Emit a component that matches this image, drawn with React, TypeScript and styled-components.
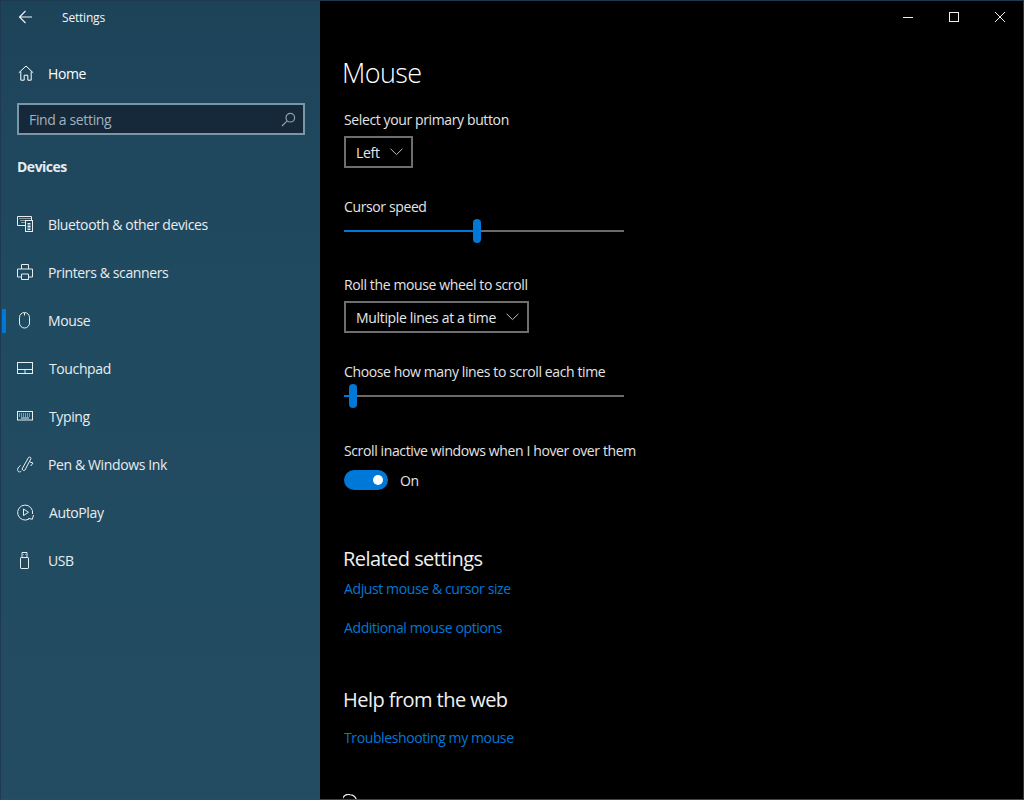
import React from "react";
import styled, { createGlobalStyle } from "styled-components";

const Global = createGlobalStyle`
  html, body { margin: 0; padding: 0; background: #000; }
  body { font-family: "Open Sans", "Noto Sans", "Liberation Sans", sans-serif; }
  * { box-sizing: border-box; }
`;

const Frame = styled.div`
  width: 1024px; height: 800px; display: flex; overflow: hidden;
  border: 1px solid #1d3a50; border-bottom-color: #1f5068; background: #000;
  position: relative;
`;
const Sidebar = styled.aside`
  width: 319px; flex: none; display: flex; flex-direction: column; color: #fff;
  background: linear-gradient(180deg, #1d4359 0%, #204a60 35%, #234c62 100%);
`;
const TitleRow = styled.div`
  height: 32px; margin-bottom: 23px; display: flex; align-items: center; padding-left: 17px; gap: 28px;
`;
const TitleText = styled.span`
  font-size: 12px; letter-spacing: -0.2px; color: #f2f5f7;
`;
const HomeRow = styled.div`
  height: 34px; display: flex; align-items: center; padding-left: 17px; gap: 14px;
  font-size: 14px; letter-spacing: -0.4px; color: #fff;
`;
const SearchBox = styled.div`
  margin: 13px 15px 0 16px; height: 32px; display: flex; align-items: center; justify-content: space-between;
  padding: 0 7px 0 10px; border: 2px solid #7b97a6; background: #15293a;
  font-size: 14px; letter-spacing: -0.35px; color: #a3b1bb;
`;
const Section = styled.div`
  margin: 22px 0 0 16px; height: 20px; line-height: 20px; font-size: 14px; font-weight: 700;
  letter-spacing: -0.5px; color: #e6ecef;
`;
const NavList = styled.nav`
  margin-top: 23px; display: flex; flex-direction: column;
`;
const NavItem = styled.div<{ $active?: boolean; $gap?: number }>`
  height: 48px; display: flex; align-items: center; padding-left: 16px; gap: ${(p) => p.$gap ?? 15}px; position: relative;
  font-size: 14px; letter-spacing: -0.38px; color: #e8edf0;
  &::before {
    content: ""; display: ${(p) => (p.$active ? "block" : "none")};
    position: absolute; left: 1px; top: 13px; width: 4px; height: 24px; background: #0078d7;
  }
`;
const IconSlot = styled.span`
  width: 16px; height: 20px; display: flex; align-items: center; justify-content: center; flex: none;
  svg { display: block; overflow: visible; }
`;
const Main = styled.main`
  flex: 1; min-width: 0; position: relative; padding: 53px 0 0 22px; color: #fff; overflow: hidden;
`;
const WindowControls = styled.div`
  position: absolute; top: 0; right: 0; display: flex; height: 32px;
`;
const ControlButton = styled.span`
  width: 46px; height: 32px; display: flex; align-items: center; justify-content: center;
`;
const PageTitle = styled.h1`
  margin: 0; height: 38px; line-height: 38px; font-size: 27px; font-weight: 300; letter-spacing: -0.6px; color: #fff;
`;
const Field = styled.div<{ $top: number }>`
  margin-top: ${(p) => p.$top}px; margin-left: 2px;
`;
const Label = styled.div`
  font-size: 14px; line-height: 20px; letter-spacing: -0.38px; color: #e4e4e4;
`;
const Dropdown = styled.div`
  margin-top: 6px; display: inline-flex; align-items: center; height: 32px; padding: 0 8px 0 10px; gap: 10px;
  border: 2px solid #6e6e6e; font-size: 14px; letter-spacing: -0.33px; color: #e8e8e8;
`;
const SliderTrack = styled.div`
  position: relative; width: 280px; height: 2px; margin-top: 13px; margin-bottom: 12px; background: #6a6a6a;
`;
const SliderFill = styled.div`
  position: absolute; left: 0; top: 0; height: 2px; background: #0078d7;
`;
const SliderThumb = styled.div`
  position: absolute; top: -11px; width: 8px; height: 24px; border-radius: 4px; background: #0078d7;
`;
const ToggleRow = styled.div`
  margin-top: 9px; display: flex; align-items: center; gap: 12px; font-size: 14px; letter-spacing: -0.35px; color: #e4e4e4;
`;
const Toggle = styled.div`
  width: 44px; height: 20px; border-radius: 10px; background: #0078d7; position: relative;
  &::after {
    content: ""; position: absolute; right: 5px; top: 5px; width: 10px; height: 10px; border-radius: 50%; background: #fff;
  }
`;
const SectionTitle = styled.h2<{ $top: number }>`
  margin: ${(p) => p.$top}px 0 0 1px; height: 26px; line-height: 26px; font-size: 20px; font-weight: 400;
  letter-spacing: -0.55px; color: #f0f0f0;
`;
const LinkText = styled.a<{ $top: number }>`
  display: block; margin: ${(p) => p.$top}px 0 0 2px; line-height: 20px; font-size: 14px; letter-spacing: -0.39px;
  color: #0078d7; text-decoration: none;
`;
const HelpRow = styled.div`
  margin: 46px 0 0 1px; display: flex; align-items: center;
`;

const stroke = { fill: "none", stroke: "currentColor", strokeWidth: 1 } as const;

const Back = () => (
  <svg width="16" height="16" viewBox="0 0 16 16" {...stroke} color="#f2f5f7" strokeWidth={1.1}><path d="M1.5 8H14M7.5 2 1.5 8l6 6" /></svg>
);
const Home = () => (
  <svg width="16" height="16" viewBox="0 0 16 16" {...stroke} color="#fff"><path d="M.8 7.8 8 1l7.2 6.8M2.8 6.5v8.7h3.4v-5h3.6v5h3.4V6.5" /></svg>
);
const Search = () => (
  <svg width="15" height="15" viewBox="0 0 15 15" {...stroke} color="#8fa0ab" strokeWidth={1.2}><circle cx="9.3" cy="5.7" r="4.3" /><path d="M6.2 8.8 1 14" /></svg>
);
const Bluetooth = () => (
  <svg width="16" height="16" viewBox="0 0 16 16" {...stroke} color="#e8edf0"><path d="M8 9.5H.5v-9h14v3.5" /><path d="M2.5 2.5h1m1 0h1m1 0h1m1 0h1m1 0h1m1 0h1m-10 2h1m1 0h1m1 0h1m-4 2h1m1 0h1" /><rect x="8.5" y="4.5" width="7" height="11" /><path d="M10.5 7.5h3m-3 1.5h3m-3 1.5h3m-3 1.5h3m-3 1.5h3" /></svg>
);
const Printer = () => (
  <svg width="16" height="16" viewBox="0 0 16 16" {...stroke} color="#e8edf0"><path d="M4.5 5V.5h7V5M4.5 13H.5V5h15v8h-4" /><path d="M4.5 10h7v5.5h-7z" /></svg>
);
const MouseIcon = () => (
  <svg width="12" height="17" viewBox="0 0 12 17" {...stroke} color="#e8edf0"><rect x=".5" y=".5" width="10" height="15.5" rx="5" /><path d="M5.5 1v2.5" /></svg>
);
const Touchpad = () => (
  <svg width="16" height="13" viewBox="0 0 16 13" {...stroke} color="#e8edf0"><rect x=".5" y=".5" width="15" height="11" /><path d="M.5 7.5h15M8 7.5v4" /></svg>
);
const Keyboard = () => (
  <svg width="16" height="10" viewBox="0 0 16 10" {...stroke} color="#e8edf0"><rect x=".5" y=".5" width="15" height="8.5" /><path d="M2 3h1m1 0h1m1 0h1m1 0h1m1 0h1m1 0h1M2 5h1m1 0h1m1 0h1m1 0h1m1 0h1m1 0h1M4 7h8" /></svg>
);
const Pen = () => (
  <svg width="17" height="17" viewBox="0 0 17 17" {...stroke} color="#e8edf0"><path d="M5 13 11.5 1.5c1-1 2.8-.2 2.4 1.2L8 14c-.8 1-2 .8-3-1Z" /><path d="M3.5 9.5C1 11 .2 13 .8 14.8c.6 1.5 2.4 1.5 3.5.2M13 6l3 1-2.3 3" /></svg>
);
const AutoPlay = () => (
  <svg width="17" height="17" viewBox="0 0 17 17" {...stroke} color="#e8edf0"><path d="M12 15A7.5 7.5 0 1 1 15.5 10" /><path d="M6.5 5v6.5l5-3.2ZM16.5 11l-1.2 4.3-4-1" /></svg>
);
const Usb = () => (
  <svg width="10" height="17" viewBox="0 0 10 17" {...stroke} color="#e8edf0"><rect x=".5" y="5.5" width="8" height="11" rx=".6" /><path d="M2 5.5V.5h5v5M3.5 2.5h.5m1.2 0h.5" /></svg>
);
const Chevron = () => (
  <svg width="13" height="8" viewBox="0 0 13 8" {...stroke} color="#bdbdbd"><path d="M.6.8 6.5 6.6 12.4.8" /></svg>
);
const Minimize = () => (
  <svg width="10" height="10" viewBox="0 0 10 10" {...stroke} color="#eee"><path d="M0 5.5h10" /></svg>
);
const Maximize = () => (
  <svg width="10" height="10" viewBox="0 0 10 10" {...stroke} color="#eee"><rect x=".5" y=".5" width="9" height="9" /></svg>
);
const Close = () => (
  <svg width="10" height="10" viewBox="0 0 10 10" {...stroke} color="#eee"><path d="M0 0l10 10M10 0 0 10" /></svg>
);
const HelpBubble = () => (
  <svg width="14" height="16" viewBox="0 0 14 16" {...stroke} color="#eee" strokeWidth={1.2}><path d="M7 .6a6.4 6.4 0 0 1 0 12.8H3l-2 2v-4A6.4 6.4 0 0 1 7 .6Z" /></svg>
);

const items: { label: string; icon: React.ReactNode; active?: boolean; gap?: number }[] = [
  { label: "Bluetooth & other devices", icon: <Bluetooth /> },
  { label: "Printers & scanners", icon: <Printer /> },
  { label: "Mouse", icon: <MouseIcon />, active: true },
  { label: "Touchpad", icon: <Touchpad />, gap: 16 },
  { label: "Typing", icon: <Keyboard />, gap: 16 },
  { label: "Pen & Windows Ink", icon: <Pen /> },
  { label: "AutoPlay", icon: <AutoPlay />, gap: 16 },
  { label: "USB", icon: <Usb /> },
];

const Slider = ({ value }: { value: number }) => (
  <SliderTrack>
    <SliderFill style={{ width: value }} />
    <SliderThumb style={{ left: value }} />
  </SliderTrack>
);

export default function App() {
  return (
    <Frame>
      <Global />
      <Sidebar>
        <TitleRow>
          <IconSlot><Back /></IconSlot>
          <TitleText>Settings</TitleText>
        </TitleRow>
        <HomeRow>
          <IconSlot><Home /></IconSlot>
          Home
        </HomeRow>
        <SearchBox>
          Find a setting
          <Search />
        </SearchBox>
        <Section>Devices</Section>
        <NavList>
          {items.map((it) => (
            <NavItem key={it.label} $active={it.active} $gap={it.gap}>
              <IconSlot>{it.icon}</IconSlot>
              {it.label}
            </NavItem>
          ))}
        </NavList>
      </Sidebar>
      <Main>
        <WindowControls>
          <ControlButton><Minimize /></ControlButton>
          <ControlButton><Maximize /></ControlButton>
          <ControlButton><Close /></ControlButton>
        </WindowControls>
        <PageTitle>Mouse</PageTitle>
        <Field $top={18}>
          <Label>Select your primary button</Label>
          <Dropdown>Left <Chevron /></Dropdown>
        </Field>
        <Field $top={29}>
          <Label>Cursor speed</Label>
          <Slider value={129} />
        </Field>
        <Field $top={43}>
          <Label>Roll the mouse wheel to scroll</Label>
          <Dropdown>Multiple lines at a time <Chevron /></Dropdown>
        </Field>
        <Field $top={29}>
          <Label>Choose how many lines to scroll each time</Label>
          <Slider value={5} />
        </Field>
        <Field $top={44}>
          <Label>Scroll inactive windows when I hover over them</Label>
          <ToggleRow><Toggle />On</ToggleRow>
        </Field>
        <SectionTitle $top={56}>Related settings</SectionTitle>
        <LinkText $top={7}>Adjust mouse &amp; cursor size</LinkText>
        <LinkText $top={19}>Additional mouse options</LinkText>
        <SectionTitle $top={49}>Help from the web</SectionTitle>
        <LinkText $top={15}>Troubleshooting my mouse</LinkText>
        <HelpRow><HelpBubble /></HelpRow>
      </Main>
    </Frame>
  );
}
